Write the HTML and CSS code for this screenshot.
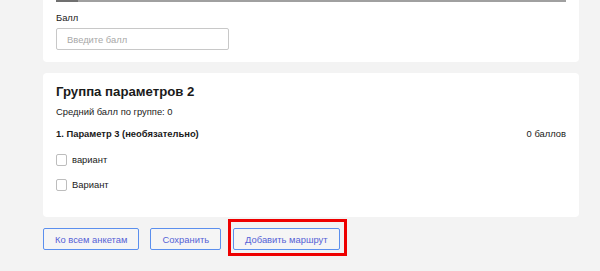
FILE: index.html
```html
<!DOCTYPE html>
<html lang="ru">

<head>
    <meta charset="UTF-8">
    <meta name="viewport" content="width=device-width, initial-scale=1.0">
    <title>Анкета</title>
    <link rel="stylesheet" href="styles.css">
</head>

<body>
    <div class="page">
        <div class="card card_top">
            <div class="bar"><span class="bar_fill"></span></div>
            <label class="field_label" for="score">Балл</label>
            <input type="text" id="score" class="field" placeholder="Введите балл">
        </div>

        <div class="card">
            <h2 class="group_title">Группа параметров 2</h2>
            <div class="group_avg">Средний балл по группе: 0</div>
            <div class="param_row">
                <span class="param_name">1. Параметр 3 (необязательно)</span>
                <span class="param_score">0 баллов</span>
            </div>
            <label class="option"><input type="checkbox"><span>вариант</span></label>
            <label class="option"><input type="checkbox"><span>Вариант</span></label>
        </div>

        <div class="actions">
            <button class="btn">Ко всем анкетам</button>
            <button class="btn">Сохранить</button>
            <div class="marked"><button class="btn">Добавить маршрут</button></div>
        </div>
    </div>
</body>

</html>
```

FILE: styles.css
```css
body {
    margin: 0;
    min-height: 271px;
    background: #f3f3f3;
    font-family: "Liberation Sans", Arial, sans-serif;
    font-size: 9.4px;
    color: #1a1a1a;
}

.page {
    width: 536px;
    margin-left: 43px;
    padding-bottom: 22px;
}

.card {
    background: #fff;
    border-radius: 4px;
    padding: 11px 13px 20px;
    margin-bottom: 11px;
}

.card_top {
    border-radius: 0 0 4px 4px;
    padding-top: 0;
    padding-bottom: 12px;
}

.bar {
    height: 2px;
    background: #a0a0a0;
}

.bar_fill {
    display: block;
    width: 22px;
    height: 2px;
    background: #707070;
}

.field_label {
    display: block;
    margin-top: 10px;
    line-height: 12px;
}

.field {
    display: block;
    box-sizing: border-box;
    width: 173px;
    height: 22px;
    margin-top: 4px;
    padding: 0 10px;
    border: 1px solid #c8c8c8;
    border-radius: 2px;
    font-family: inherit;
    font-size: 9.4px;
}

.field::placeholder {
    color: #a8a8a8;
}

.group_title {
    margin: 0;
    font-size: 13.2px;
    line-height: 16px;
}

.group_avg {
    margin-top: 6px;
    line-height: 12px;
}

.param_row {
    display: flex;
    justify-content: space-between;
    line-height: 12px;
    margin-top: 10px;
    margin-bottom: 7px;
}

.param_name {
    font-weight: bold;
}

.option {
    display: flex;
    align-items: center;
    height: 25px;
}

.option input {
    appearance: none;
    width: 11px;
    height: 12px;
    margin: 0 5px 0 0;
    border: 1px solid #bdbdbd;
    border-radius: 2px;
    background: #fff;
}

.actions {
    display: flex;
    align-items: flex-start;
    gap: 11px;
}

.btn {
    display: block;
    height: 22px;
    padding: 0 11px;
    border: 1px solid #5b8fee;
    border-radius: 2px;
    background: #f5f5f5;
    color: #5662d6;
    font-family: inherit;
    font-size: 9.4px;
}

.marked {
    margin: -9px -7px -6px -4px;
    padding: 6px 4px 3px 2px;
    border: 3px solid #ee0000;
}
```
